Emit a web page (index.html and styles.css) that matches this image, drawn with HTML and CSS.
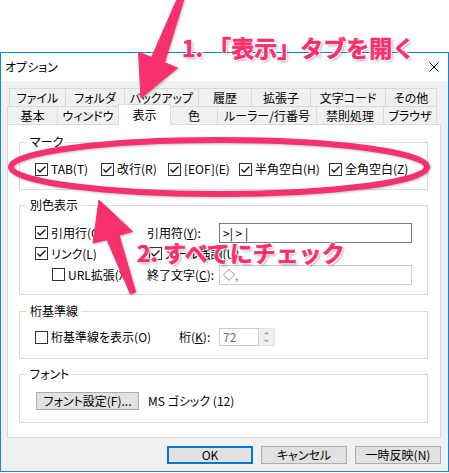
FILE: index.html
```html
<!DOCTYPE html>
<html lang="ja">
<head>
<meta charset="UTF-8">
<title>オプション</title>
<link rel="stylesheet" href="styles.css">
</head>
<body>

<div class="stage">
  <div class="dialog">
    <div class="titlebar">
      <span class="title">オプション</span>
      <svg class="close-x" width="10" height="10" viewBox="0 0 10 10"><path d="M0.5 0.5L9.5 9.5M9.5 0.5L0.5 9.5"/></svg>
    </div>

    <div class="dialog-body">
      <div class="tab-row row-back">
        <div class="tab">ファイル</div>
        <div class="tab">フォルダ</div>
        <div class="tab">バックアップ</div>
        <div class="tab">履歴</div>
        <div class="tab">拡張子</div>
        <div class="tab">文字コード</div>
        <div class="tab">その他</div>
      </div>
      <div class="tab-row row-front">
        <div class="tab">基本</div>
        <div class="tab">ウィンドウ</div>
        <div class="tab active">表示</div>
        <div class="tab">色</div>
        <div class="tab">ルーラー/行番号</div>
        <div class="tab">禁則処理</div>
        <div class="tab">ブラウザ</div>
      </div>

      <div class="panel">
        <fieldset class="group group-mark">
          <legend>マーク</legend>
          <div class="mark-row">
            <label class="check"><span class="box"><svg viewBox="0 0 11 11"><path d="M1.5 5.5L4 8L9.5 2.5"/></svg></span>TAB(T)</label>
            <label class="check"><span class="box"><svg viewBox="0 0 11 11"><path d="M1.5 5.5L4 8L9.5 2.5"/></svg></span>改行(R)</label>
            <label class="check"><span class="box"><svg viewBox="0 0 11 11"><path d="M1.5 5.5L4 8L9.5 2.5"/></svg></span>[EOF](E)</label>
            <label class="check"><span class="box"><svg viewBox="0 0 11 11"><path d="M1.5 5.5L4 8L9.5 2.5"/></svg></span>半角空白(H)</label>
            <label class="check"><span class="box"><svg viewBox="0 0 11 11"><path d="M1.5 5.5L4 8L9.5 2.5"/></svg></span>全角空白(Z)</label>
          </div>
        </fieldset>

        <fieldset class="group group-color">
          <legend>別色表示</legend>
          <div class="color-grid">
            <label class="check"><span class="box"><svg viewBox="0 0 11 11"><path d="M1.5 5.5L4 8L9.5 2.5"/></svg></span>引用行(Q)</label>
            <span class="cap">引用符(<u>Y</u>):</span>
            <div class="field">&gt;| &gt; |</div>

            <label class="check"><span class="box"><svg viewBox="0 0 11 11"><path d="M1.5 5.5L4 8L9.5 2.5"/></svg></span>リンク(L)</label>
            <label class="check wide"><span class="box"><svg viewBox="0 0 11 11"><path d="M1.5 5.5L4 8L9.5 2.5"/></svg></span>メール強調(U)</label>

            <label class="check indent"><span class="box"></span>URL拡張(X)</label>
            <span class="cap">終了文字(<u>C</u>):</span>
            <div class="field off">◇,</div>
          </div>
        </fieldset>

        <fieldset class="group group-ruler">
          <legend>桁基準線</legend>
          <div class="ruler-row">
            <label class="check"><span class="box"></span>桁基準線を表示(O)</label>
            <span class="cap">桁(<u>K</u>):</span>
            <div class="spin">
              <div class="field off">72</div>
              <div class="spin-btns">
                <svg width="16" height="9" viewBox="0 0 16 9"><path d="M5 6L8 3L11 6Z"/></svg>
                <svg width="16" height="9" viewBox="0 0 16 9"><path d="M5 3L8 6L11 3Z"/></svg>
              </div>
            </div>
          </div>
        </fieldset>

        <fieldset class="group group-font">
          <legend>フォント</legend>
          <div class="font-row">
            <button class="btn font-btn">フォント設定(F)...</button>
            <span>MS ゴシック (12)</span>
          </div>
        </fieldset>
      </div>

      <div class="actions">
        <button class="btn default">OK</button>
        <button class="btn">キャンセル</button>
        <button class="btn">一時反映(N)</button>
      </div>
    </div>
  </div>

  <!-- annotations drawn on top of the screenshot -->
  <svg class="marks" width="449" height="473" viewBox="0 0 449 473">
    <ellipse cx="219" cy="167" rx="208" ry="27" class="ring"/>
    <polygon class="arrow" points="181.5,-11 151.5,57.4 138.5,52 141,98 177.5,68 164.5,62.6 186.5,-9"/>
    <polygon class="arrow" points="130.4,294 106.9,239.7 93,243 99,200 132.5,231.5 119.1,235.3 135.6,292"/>
  </svg>
  <div class="note note-1">1. 「表示」タブを開く</div>
  <div class="note note-2">2. すべてにチェック</div>
</div>

</body>
</html>
```

FILE: styles.css
```css
* {
  box-sizing: border-box;
}

body {
  margin: 0;
  background-color: #fff;
  font-family: "Noto Sans CJK JP", "Noto Sans", sans-serif;
  font-size: 12px;
  color: #000;
}

.stage {
  position: relative;
  width: 449px;
  height: 473px;
  overflow: hidden;
}

.dialog {
  margin-top: 52px;
  width: 449px;
  height: 420px;
  border: 1px solid #1883d7;
  background-color: #f0f0f0;
  line-height: 16px;
  font-feature-settings: "palt";
}

.titlebar {
  height: 28px;
  background-color: #fff;
  display: flex;
  align-items: center;
  justify-content: space-between;
  padding: 0 9px 0 4px;
}

.close-x path {
  stroke: #000;
  stroke-width: 1;
  fill: none;
}

.dialog-body {
  padding: 7px 7px 0 6px;
}

/* tabs */
.tab-row {
  display: grid;
  grid-template-rows: 18px;
}

.row-back {
  grid-template-columns: 57px 59px 74px 53px 59px 75px 51px;
  margin-left: 2px;
}

.row-front {
  grid-template-columns: 51px 61px 52px 47px 99px 67px 53px;
}

.tab {
  height: 18px;
  border: 1px solid #d9d9d9;
  border-left: 0;
  border-bottom: 0;
  text-align: center;
  line-height: 17px;
  white-space: nowrap;
}

.tab:first-child {
  border-left: 1px solid #d9d9d9;
}

.tab.active {
  position: relative;
  z-index: 1;
  height: 21px;
  margin: -2px 0 -1px -1px;
  border-left: 1px solid #d9d9d9;
  background-color: #fff;
  line-height: 19px;
}

/* page */
.panel {
  width: 434px;
  background-color: #fff;
  border: 1px solid #d9d9d9;
  padding: 9px 0 14px;
}

.group {
  margin: 0 12px 0 11px;
  border: 1px solid #dcdcdc;
  padding: 11px 15px 12px;
  min-width: 0;
}

.group legend {
  margin-left: -8px;
  padding: 0 3px;
  line-height: 16px;
}

.group-color {
  margin-top: 7px;
  padding-top: 9px;
  padding-bottom: 9px;
}

.group-ruler {
  margin-top: 8px;
  padding-top: 9px;
}

.group-font {
  margin-top: 7px;
  padding-top: 10px;
}

.check {
  display: flex;
  align-items: center;
  gap: 3px;
  white-space: nowrap;
}

.box {
  flex: none;
  width: 13px;
  height: 13px;
  border: 1px solid #333;
  background-color: #fff;
  display: flex;
}

.box svg {
  width: 11px;
  height: 11px;
}

.box path {
  fill: none;
  stroke: #111;
  stroke-width: 1.3;
}

.mark-row {
  display: grid;
  grid-template-columns: 66px 67px 71px 90px auto;
  height: 16px;
}

.color-grid {
  display: grid;
  grid-template-columns: 112px 72px 193px;
  grid-template-rows: 21px 21px 21px;
  align-items: center;
}

.check.wide {
  grid-column: 2 / 4;
  margin-left: 2px;
}

.check.indent {
  margin-left: 17px;
}

.field {
  height: 20px;
  border: 1px solid #7a7a7a;
  background-color: #fff;
  padding: 0 3px;
  line-height: 18px;
  white-space: nowrap;
}

.field.off {
  border-color: #cccccc;
  color: #6d6d6d;
}

.ruler-row {
  display: grid;
  grid-template-columns: 144px 40px auto;
  align-items: center;
  height: 18px;
}

.spin {
  display: flex;
}

.spin .field {
  width: 40px;
  height: 18px;
  line-height: 16px;
}

.spin-btns {
  width: 16px;
  height: 18px;
  display: flex;
  flex-direction: column;
  background-color: #f0f0f0;
  border: 1px solid #e3e3e3;
  border-left: 0;
}

.spin-btns svg {
  display: block;
  width: 15px;
  height: 8px;
}

.spin-btns path {
  fill: #a3a3a3;
}

.font-row {
  display: flex;
  align-items: center;
  gap: 9px;
  height: 18px;
}

.btn {
  height: 18px;
  padding: 0;
  background-color: #e1e1e1;
  border: 1px solid #adadad;
  font-family: inherit;
  font-size: 12px;
  line-height: 16px;
  color: #000;
  font-feature-settings: "palt";
}

.font-btn {
  width: 103px;
  margin-left: 1px;
}

.actions {
  display: flex;
  justify-content: flex-end;
  gap: 8px;
  margin-top: 8px;
}

.actions .btn {
  width: 86px;
}

.btn.default {
  border: 2px solid #0078d7;
  line-height: 14px;
}

/* annotations */
.marks {
  position: absolute;
  left: 0;
  top: 0;
  pointer-events: none;
  filter: drop-shadow(1px 1px 1px rgba(0, 0, 0, 0.25));
}

.ring {
  fill: none;
  stroke: #f8306e;
  stroke-width: 6;
}

.arrow {
  fill: #f8306e;
  stroke: #f8306e;
  stroke-width: 1;
  stroke-linejoin: round;
}

.note {
  position: absolute;
  color: #f8306e;
  font-weight: 700;
  font-size: 23px;
  line-height: 30px;
  white-space: nowrap;
  -webkit-text-stroke: 0.6px #f8306e;
  text-shadow: -1px -1px 0 #fff, 1px -1px 0 #fff, -1px 1px 0 #fff, 1px 1px 0 #fff,
    2px 2px 3px rgba(0, 0, 0, 0.3);
}

.note-1 {
  left: 182px;
  top: 32px;
}

.note-2 {
  left: 137px;
  top: 237px;
}
```
